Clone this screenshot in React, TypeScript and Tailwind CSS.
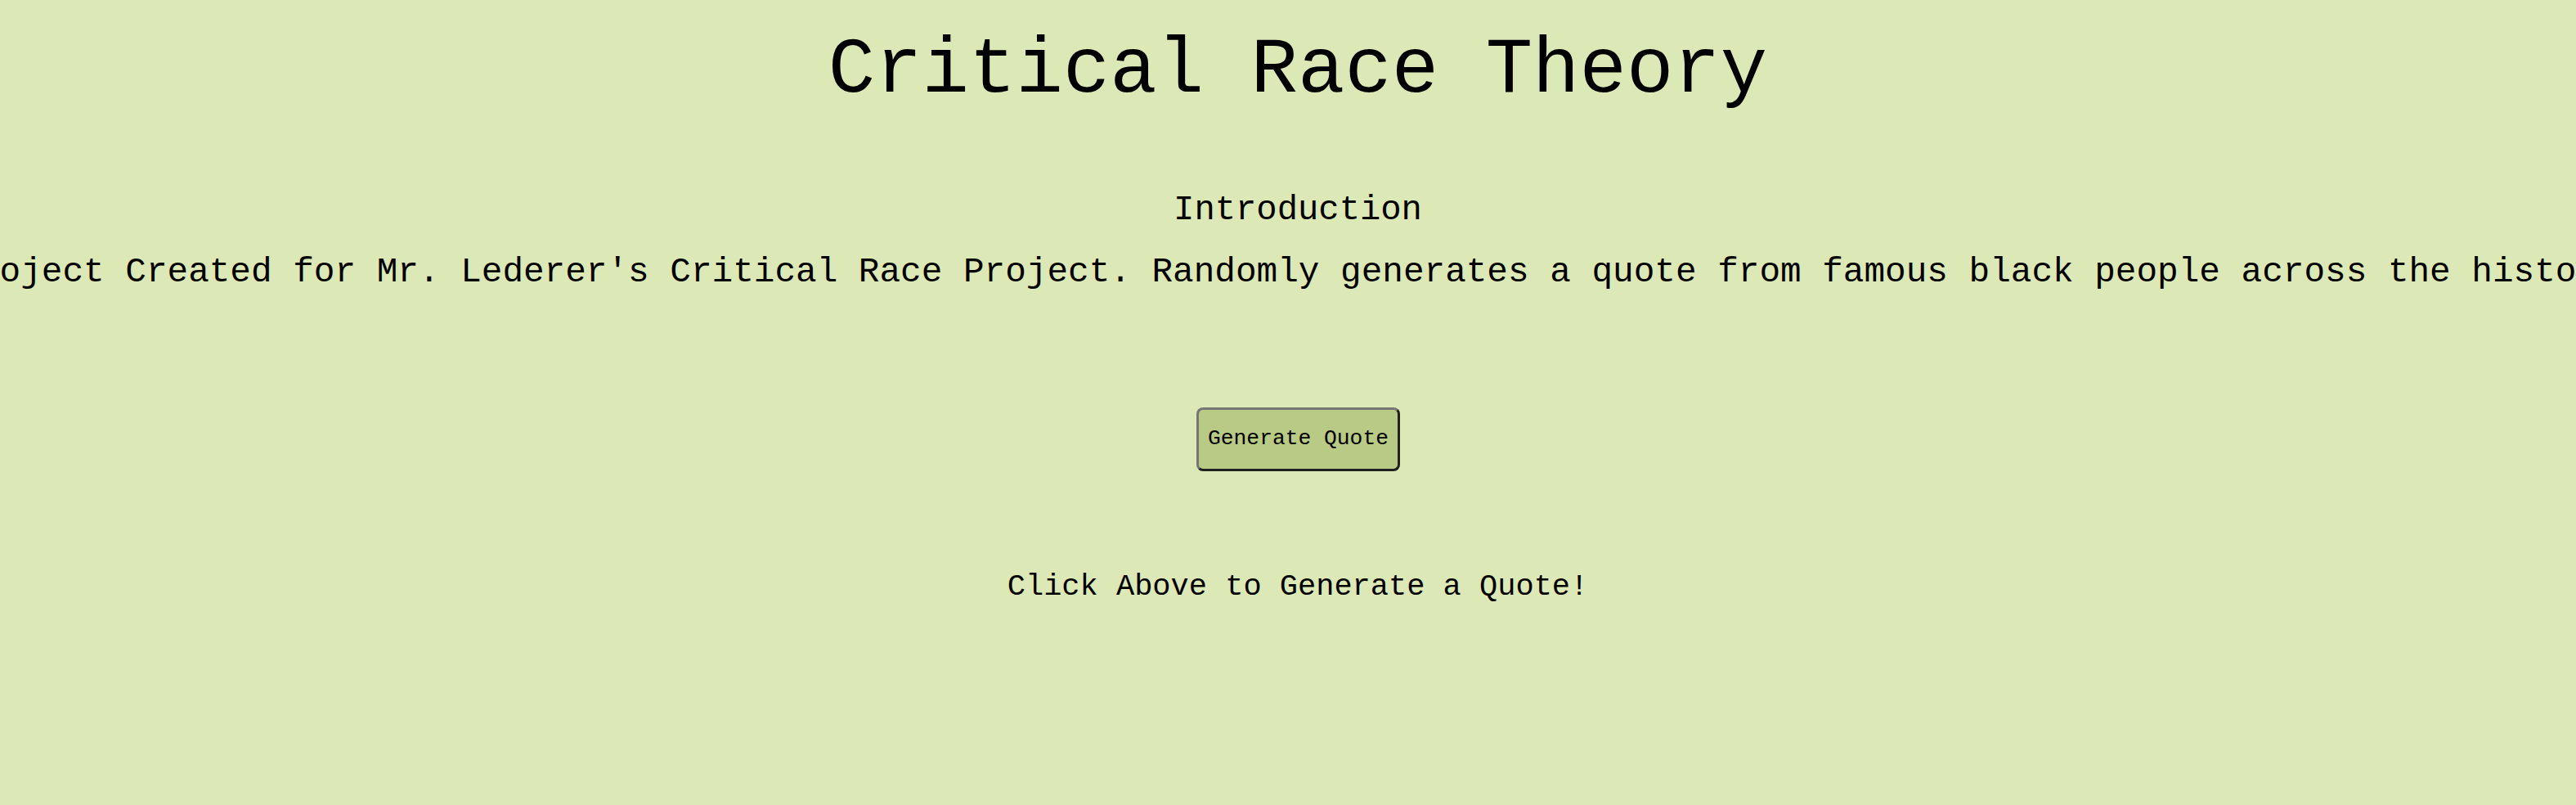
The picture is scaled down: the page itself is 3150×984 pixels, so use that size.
export default function App() {
  return (
    <div className="min-h-screen w-full overflow-hidden bg-[#dce9b6] font-['Liberation_Mono',monospace] text-black">
      <div className="flex flex-col items-center">
        <h1 className="ml-[24px] mt-[39px] text-[95.7px] leading-none font-normal whitespace-nowrap">
          Critical Race Theory
        </h1>

        <h2 className="ml-[24px] mt-[101px] text-[42.2px] leading-none font-normal">Introduction</h2>
        <p className="mt-[34px] text-[42.7px] leading-none whitespace-nowrap">
          Project Created for Mr. Lederer's Critical Race Project. Randomly generates a quote from famous black people across the history
        </p>

        <button
          type="button"
          className="ml-[25px] mt-[143px] flex h-[78px] items-center rounded-[8px] border-[3px] border-t-[#767676] border-l-[#767676] border-b-[#1f1f1f] border-r-[#1f1f1f] bg-[#b8ca83] px-[11px] text-[26.3px] leading-none"
        >
          Generate Quote
        </button>

        <p className="ml-[24px] mt-[123px] text-[37px] leading-none whitespace-nowrap">Click Above to Generate a Quote!</p>
      </div>
    </div>
  );
}
